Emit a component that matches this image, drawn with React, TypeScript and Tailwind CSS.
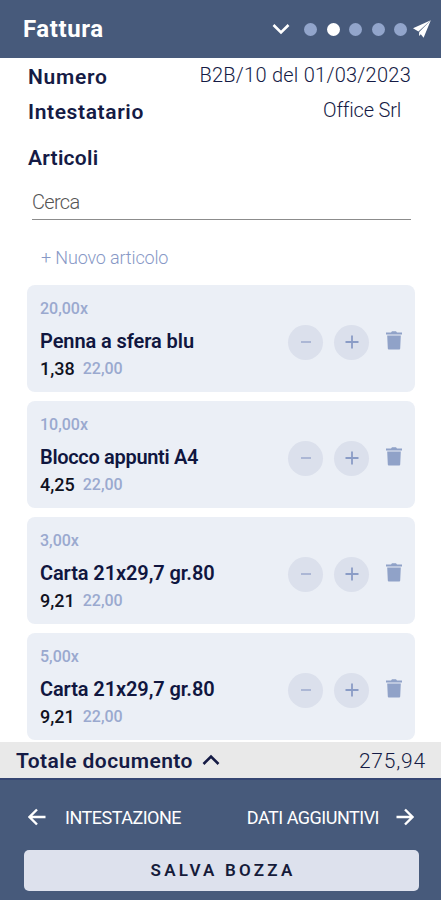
import clsx from "clsx";

const STEPS = 5;
const CURRENT_STEP = 1;

type Item = {
  qty: string;
  name: string;
  price: string;
  vat: string;
  nameClass: string;
};

const items: Item[] = [
  {
    qty: "20,00x",
    name: "Penna a sfera blu",
    price: "1,38",
    vat: "22,00",
    nameClass: "tracking-[-0.08px]",
  },
  {
    qty: "10,00x",
    name: "Blocco appunti A4",
    price: "4,25",
    vat: "22,00",
    nameClass: "tracking-[-0.32px]",
  },
  {
    qty: "3,00x",
    name: "Carta 21x29,7 gr.80",
    price: "9,21",
    vat: "22,00",
    nameClass: "tracking-[-0.1px]",
  },
  {
    qty: "5,00x",
    name: "Carta 21x29,7 gr.80",
    price: "9,21",
    vat: "22,00",
    nameClass: "tracking-[-0.1px]",
  },
];

function Chevron({ up = false, className }: { up?: boolean; className?: string }) {
  return (
    <svg
      viewBox="0 0 18 12"
      className={clsx("h-3 w-[18px]", className)}
      fill="none"
      stroke="currentColor"
      strokeWidth="2.6"
    >
      <path d={up ? "M1.5 10 9 2.5 16.5 10" : "M1.5 2 9 9.5 16.5 2"} />
    </svg>
  );
}

function Arrow({ right = false }: { right?: boolean }) {
  return (
    <svg
      viewBox="0 0 18 18"
      className="h-[18px] w-[18px]"
      fill="none"
      stroke="currentColor"
      strokeWidth="2.4"
    >
      <path d={right ? "M0.5 9H16M9 1.5 16.5 9 9 16.5" : "M17.5 9H2M9 1.5 1.5 9 9 16.5"} />
    </svg>
  );
}

function Plane() {
  return (
    <svg viewBox="0 0 18 18" className="h-[18px] w-[18px]" fill="currentColor">
      <path d="M17.8 0.2 0 8.2 5.4 11.4z" />
      <path d="M17.8 0.2 6.2 12 6 16 7.8 14.2 10.6 17.8z" />
    </svg>
  );
}

function Trash() {
  return (
    <svg viewBox="0 0 16 19" className="h-[19px] w-4" fill="currentColor">
      <path d="M0 1.4h5L6 0.2h4l1 1.2h5v2H0z" />
      <path d="M1.2 4.4h13.6L14.2 17.6a1 1 0 0 1-1 1H2.8A1 1 0 0 1 1.8 17.6z" />
    </svg>
  );
}

function RoundButton({ plus = false, className }: { plus?: boolean; className?: string }) {
  return (
    <button
      className={clsx(
        "flex h-[35px] w-[35px] items-center justify-center rounded-full bg-[#dbe0ec]",
        className,
      )}
    >
      <svg
        viewBox="0 0 14 14"
        className="h-3.5 w-3.5"
        stroke={plus ? "#8a9cc6" : "#a6b3d3"}
        strokeWidth="1.8"
      >
        <path d={plus ? "M0.5 7h13M7 0.5v13" : "M2 7h10"} />
      </svg>
    </button>
  );
}

function ItemCard({ item }: { item: Item }) {
  return (
    <div className="flex h-[107px] shrink-0 rounded-lg bg-[#ebeff6] pl-[13px] pr-[13px] pt-[13px]">
      <div className="flex-1 whitespace-nowrap">
        <div className="h-5 pt-px text-[16px] leading-5 font-medium text-[#9aa9cf]">
          {item.qty}
        </div>
        <div
          className={clsx(
            "mt-[11px] h-6 text-[20px] leading-6 font-semibold text-[#10163f]",
            item.nameClass,
          )}
        >
          {item.name}
        </div>
        <div className="mt-[5px] flex h-5 gap-2 leading-5">
          <span className="pt-px text-[18px] font-medium text-[#10121f]">{item.price}</span>
          <span className="pt-px text-[16px] font-medium text-[#9aa9cf]">{item.vat}</span>
        </div>
      </div>
      <div className="flex h-[88px] items-center">
        <RoundButton />
        <RoundButton plus className="ml-[11px]" />
        <button className="mb-[4px] ml-[17px] text-[#90a2c8]">
          <Trash />
        </button>
      </div>
    </div>
  );
}

export default function App() {
  return (
    <div className="flex h-[900px] w-[441px] flex-col overflow-hidden bg-white font-['Roboto','Liberation_Sans',sans-serif] text-[#151b45]">
      <header className="flex h-[58px] shrink-0 items-center bg-[#475a7b] pl-[23px] pr-[10px] text-white">
        <h1 className="flex-1 text-[24px] leading-7 font-bold tracking-[0.6px]">Fattura</h1>
        <Chevron className="mr-[14px]" />
        <div className="mr-[6px] flex gap-[9.5px]">
          {Array.from({ length: STEPS }, (_, i) => (
            <span
              key={i}
              className={clsx(
                "h-[13px] w-[13px] rounded-full",
                i === CURRENT_STEP ? "bg-white" : "bg-[#92a5cb]",
              )}
            />
          ))}
        </div>
        <Plane />
      </header>

      <main className="flex min-h-0 flex-1 flex-col overflow-hidden pl-[27px] pr-[26px]">
        <div className="mt-[6px] flex h-6 shrink-0 justify-between pl-px pr-1 leading-6">
          <span className="pt-px text-[21px] font-semibold tracking-[0.7px]">Numero</span>
          <span className="-mt-px text-[20px] font-light tracking-[0.26px]">
            B2B/10 del 01/03/2023
          </span>
        </div>
        <div className="mt-[11px] flex h-6 shrink-0 justify-between pl-px pr-[14px] leading-6">
          <span className="pt-px text-[21px] font-semibold tracking-[0.62px]">Intestatario</span>
          <span className="-mt-px text-[20px] font-light tracking-[-0.2px]">Office Srl</span>
        </div>
        <h2 className="mt-[23px] h-6 shrink-0 pl-px text-[21px] leading-6 font-semibold tracking-[0.25px]">
          Articoli
        </h2>
        <div className="mt-[20px] mr-1 ml-[5px] h-[30px] shrink-0 border-b border-[#8c8c8c] text-[20px] leading-6 font-light tracking-[-0.7px] text-[#555]">
          Cerca
        </div>
        <button className="mt-[26px] ml-[14px] h-6 shrink-0 text-left text-[18px] leading-6 font-light tracking-[-0.15px] text-[#8798c6]">
          + Nuovo articolo
        </button>
        <div className="mt-[15px] flex flex-col gap-[9px]">
          {items.map((item, i) => (
            <ItemCard key={i} item={item} />
          ))}
        </div>
      </main>

      <div className="flex h-[36px] shrink-0 items-center bg-[#e9e9e9] pl-4 pr-[15px]">
        <span className="pt-0.5 text-[21px] leading-6 font-semibold tracking-[0.44px]">
          Totale documento
        </span>
        <Chevron up className="ml-[9px]" />
        <span className="ml-auto pt-0.5 text-[21px] leading-6 font-light tracking-[0.8px]">
          275,94
        </span>
      </div>

      <footer className="h-[122px] shrink-0 border-t-2 border-[#364672] bg-[#475a7b] px-6 text-white">
        <div className="mt-[25px] flex h-6 items-center pl-1 pr-[3px] text-[18px] tracking-[-0.5px]">
          <Arrow />
          <span className="ml-[19px]">INTESTAZIONE</span>
          <span className="ml-auto mr-[17px]">DATI AGGIUNTIVI</span>
          <Arrow right />
        </div>
        <button className="mt-[21px] mr-[-2px] flex h-[41px] w-[395px] items-center justify-center rounded-[5px] bg-[#dde1ed] pl-[3px] text-[17px] font-semibold tracking-[3.2px] text-[#151b3a]">
          SALVA BOZZA
        </button>
      </footer>
    </div>
  );
}
